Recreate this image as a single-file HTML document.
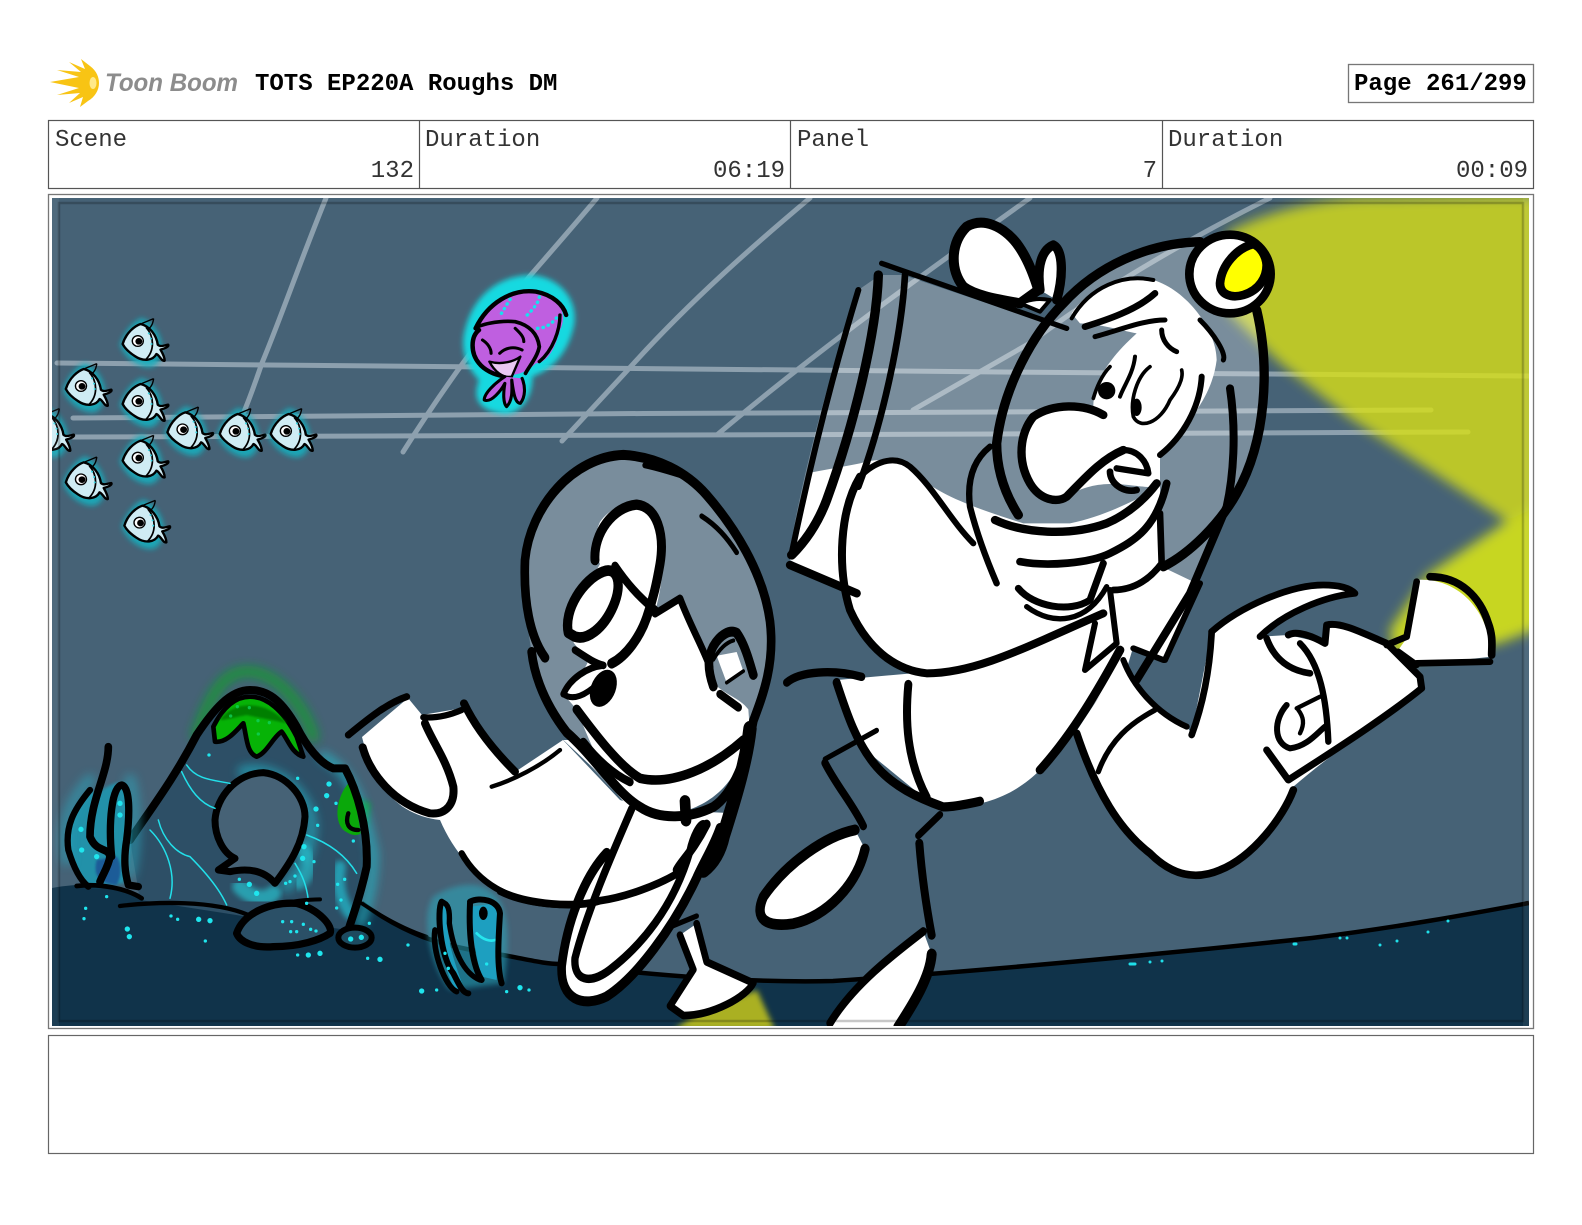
<!DOCTYPE html>
<html lang="en">
<head>
<meta charset="utf-8">
<title>TOTS EP220A Roughs DM</title>
<style>
html,body{margin:0;padding:0;background:#fff}
svg{display:block}
.m{font-family:"Liberation Mono",monospace;font-size:24px;fill:#333}
.b{font-family:"Liberation Mono",monospace;font-size:24px;font-weight:bold;fill:#000}
</style>
</head>
<body>
<svg xmlns="http://www.w3.org/2000/svg" width="1582" height="1225" viewBox="0 0 1582 1225">
<defs>
<clipPath id="img"><rect x="52" y="198" width="1477" height="828"/></clipPath>
<filter id="b3" x="-30%" y="-30%" width="160%" height="160%"><feGaussianBlur stdDeviation="3"/></filter>
<filter id="b5" x="-30%" y="-30%" width="160%" height="160%"><feGaussianBlur stdDeviation="5"/></filter>
<filter id="b6" x="-30%" y="-30%" width="160%" height="160%"><feGaussianBlur stdDeviation="6"/></filter>
<filter id="b8" x="-30%" y="-30%" width="160%" height="160%"><feGaussianBlur stdDeviation="8"/></filter>
<filter id="b14" x="-40%" y="-40%" width="180%" height="180%"><feGaussianBlur stdDeviation="14"/></filter>
<g id="f">
  <path d="M-68,4C-50,-45-25,-66-5,-76C32,-62 52,-20 54,10C52,42 46,66 20,72C-10,74-52,48-68,4Z" fill="#12aebd" opacity=".9" filter="url(#b8)"/>
  <path d="M-60,2C-50,-32-25,-52-8,-58C18,-52 38,-25 42,4C50,12 60,6 72,4C76,10 62,16 50,19C55,28 62,40 62,52C54,56 46,34 38,32C28,52 0,56-25,38C-40,28-54,14-60,2Z" fill="#cfecf4" stroke="#000" stroke-width="7" stroke-linejoin="round"/>
  <path d="M-8,-58L30,-74M14,-42C26,-52 28,-62 30,-74" fill="none" stroke="#000" stroke-width="4"/>
  <path d="M8,-48C32,-20 34,22 6,50" fill="none" stroke="#000" stroke-width="5"/>
  <path d="M16,-30h0M22,-14h0M24,2h0" stroke="#37d7e6" stroke-width="6" stroke-linecap="round"/>
  <circle cx="-16" cy="-7" r="16" fill="#fff" stroke="#000" stroke-width="4"/>
  <circle cx="-13" cy="-6" r="10" fill="#000"/>
</g>
</defs>

<rect width="1582" height="1225" fill="#fff"/>

<!-- Logo -->
<g>
<path d="M50,82L79,77L57,70L81,72L69,62L85,69L81,59L90,66C97,71 99,78 99,83C99,90 95,97 88,101L80,107L83,97L69,103L80,93L57,95L79,88Z" fill="#f8c414"/>
<ellipse cx="93" cy="83" rx="3.5" ry="6" fill="#ffe98a"/>
<text x="105" y="91" font-family="'Liberation Sans',sans-serif" font-style="italic" font-weight="bold" font-size="25" fill="#8c8c8c" textLength="133" lengthAdjust="spacingAndGlyphs">Toon Boom</text>
</g>
<text class="b" x="255" y="90">TOTS EP220A Roughs DM</text>
<rect x="1348.5" y="64.5" width="185" height="38" fill="#fff" stroke="#777" stroke-width="1.3"/>
<text class="b" x="1354" y="90">Page 261/299</text>

<!-- Table -->
<rect x="48.5" y="120.5" width="1485" height="68" fill="#fff" stroke="#555" stroke-width="1.2"/>
<path d="M419.5,120.5V188.5M790.5,120.5V188.5M1162.5,120.5V188.5" stroke="#555" stroke-width="1.2"/>
<text class="m" x="55" y="146">Scene</text>
<text class="m" x="414" y="177" text-anchor="end">132</text>
<text class="m" x="425" y="146">Duration</text>
<text class="m" x="785" y="177" text-anchor="end">06:19</text>
<text class="m" x="797" y="146">Panel</text>
<text class="m" x="1157" y="177" text-anchor="end">7</text>
<text class="m" x="1168" y="146">Duration</text>
<text class="m" x="1528" y="177" text-anchor="end">00:09</text>

<!-- Frames -->
<rect x="48.5" y="194.5" width="1485" height="834" fill="#fff" stroke="#777" stroke-width="1.3"/>
<rect x="48.5" y="1035.5" width="1485" height="118" fill="#fff" stroke="#666" stroke-width="1.2"/>

<g clip-path="url(#img)">
<rect x="52" y="198" width="1477" height="828" fill="#466276"/>

<!-- Grid -->
<g fill="none" stroke="#8da0ae" stroke-width="5" stroke-linecap="round">
<path d="M326,198C300,262 280,320 262,363C255,383 250,398 243,414"/>
<path d="M597,198C570,230 548,255 529,277C500,315 480,340 463,363C440,395 420,425 403,452"/>
<path d="M810,198C760,240 690,300 625,373L562,441"/>
<path d="M1030,198C950,255 830,340 718,434"/>
<path d="M1270,198C1190,238 1100,290 1030,343L913,410"/>
<path d="M57,363C350,366 750,369 1000,372C1200,372 1400,374 1529,376"/>
<path d="M73,418C300,415 700,413 1000,412C1200,411 1330,411 1431,410"/>
<path d="M73,437C300,436 700,435 1000,434C1200,433 1350,433 1468,432"/>
</g>

<!-- Beams -->
<g filter="url(#b6)" opacity=".8">
<path d="M1228,232C1270,210 1320,200 1360,198L1540,195V530L1507,521L1350,418L1280,363L1228,312Z" fill="#d9e017"/>
<path d="M1540,505L1507,521L1427,575L1390,630L1395,662L1500,643L1540,628Z" fill="#e8f309"/>
</g>

<!-- Ground -->
<path d="M52,888C75,884 95,884 110,886C135,892 160,900 180,905C200,905 300,905 362,903C385,920 405,930 423,937C450,947 480,952 503,955C530,960 545,964 560,964C650,975 750,983 833,981C1000,970 1200,950 1312,938C1400,927 1470,914 1529,903V1030H52Z" fill="#10334a"/>
<path d="M362,903C385,920 405,930 423,937C450,947 480,952 503,955C530,960 545,964 560,964C650,975 750,983 833,981C1000,970 1200,950 1312,938C1400,927 1470,914 1529,903" fill="none" stroke="#000" stroke-width="4.5"/>
<path d="M673,1030L700,1012L757,990L775,1030Z" fill="#aab023" filter="url(#b3)"/>

<!-- Rock (zoom 3 coords) -->
<g transform="translate(40,640) scale(.33333)" fill="none" stroke-linecap="round" stroke-linejoin="round">
<path d="M470,285C520,130 570,90 630,95C710,100 790,190 820,290" stroke="#0ca02a" stroke-width="34" filter="url(#b14)" opacity=".7"/>
<path d="M885,450C880,520 920,570 980,570L990,490Z" fill="#0ca02a" filter="url(#b8)" stroke="none"/>
<path d="M270,600C330,510 400,420 470,285C520,210 570,150 630,150C690,150 730,190 770,260C800,320 840,370 880,385L915,385C950,450 985,560 980,680C965,750 945,810 925,870L620,830L300,780Z" fill="#2d4f66"/>
<path d="M850,350C920,390 960,450 1000,640C1000,720 985,790 960,850" stroke="#27aebf" stroke-width="30" filter="url(#b14)" opacity=".75"/>
<path d="M610,395C700,375 800,450 815,550C815,620 790,690 740,740" stroke="#23a8bc" stroke-width="34" filter="url(#b14)" opacity=".7"/>
<path d="M780,620C820,660 820,690 780,730" stroke="#27d4e0" stroke-width="40" filter="url(#b8)" opacity=".5"/>
<path d="M600,740C640,780 680,780 700,760" stroke="#27d4e0" stroke-width="46" filter="url(#b8)" opacity=".6"/>
<path d="M900,680C890,730 900,780 930,820" stroke="#23bed0" stroke-width="36" filter="url(#b8)" opacity=".7"/>
<path d="M705,730C680,700 640,680 570,695L535,690L585,655C550,640 525,590 525,540C530,470 590,400 670,398C740,405 795,470 795,530C790,610 750,670 705,730Z" fill="#466276" stroke="#000" stroke-width="21"/>
<path d="M520,260L525,305C560,310 590,270 610,250C620,290 620,340 650,350C680,340 700,290 725,275C745,300 755,340 790,350L770,290C730,210 680,170 630,170C580,170 545,210 520,260Z" fill="#06b306" stroke="#000" stroke-width="14"/>
<path d="M540,240C580,180 680,180 740,250C700,240 640,230 620,225C590,230 560,240 540,240Z" fill="#007f00" filter="url(#b3)" stroke="none"/>
<path d="M925,430C890,470 880,540 910,570C930,585 950,590 962,580C955,530 945,470 925,430Z" fill="#0aa80a"/>
<path d="M925,520C915,550 925,570 955,570" stroke="#000" stroke-width="13"/>
<path d="M270,600C330,510 400,420 470,285C520,210 570,150 630,150C690,150 730,190 770,260C800,320 840,370 880,385L915,385C950,450 985,560 980,680C965,750 945,810 925,870" stroke="#000" stroke-width="24"/>
<g stroke="#22e0ea" stroke-width="4.5">
<path d="M440,375C470,420 520,420 570,430M425,395C450,450 480,490 525,505M355,540C370,600 410,640 450,650C500,700 540,750 560,795M330,570C380,620 410,700 390,775M800,585C870,610 920,650 950,700M765,670C790,710 800,740 805,780"/>
</g>
<!-- left plants -->
<path d="M150,450C90,510 70,570 90,650C110,710 140,740 170,740L250,730C280,650 280,500 260,430C230,420 200,440 170,460Z" fill="#1d9ab3" filter="url(#b5)" stroke="none" opacity=".85"/>
<path d="M150,420C90,480 60,560 80,660M270,420C290,500 290,620 270,700" stroke="#2aa7bd" stroke-width="34" filter="url(#b14)" opacity=".55"/>
<path d="M170,660C160,700 170,730 230,735C250,700 240,660 230,650Z" fill="#1d5b98" filter="url(#b3)" stroke="none"/>
<path d="M205,320C205,400 150,480 150,590C170,640 205,620 210,650C205,680 190,700 180,725" stroke="#000" stroke-width="23"/>
<path d="M150,450C100,510 75,560 85,630C100,680 120,720 145,740" stroke="#000" stroke-width="19"/>
<path d="M215,650C205,550 215,440 245,435C270,440 270,520 260,600C250,660 255,700 265,735L295,740" stroke="#000" stroke-width="22"/>
<path d="M110,738C180,730 260,745 305,775" stroke="#000" stroke-width="14"/>
<path d="M240,798C350,785 520,780 625,825" stroke="#000" stroke-width="13"/>
<!-- stones -->
<path d="M590,880C610,820 690,785 770,790C840,810 880,860 870,880C840,900 780,920 700,920C640,925 600,905 590,880Z" fill="#2b5067" stroke="#000" stroke-width="22"/>
<path d="M700,795C750,785 800,778 840,778" stroke="#000" stroke-width="12"/>
<path d="M965,790C1040,840 1100,870 1160,890" stroke="#000" stroke-width="11"/>
<ellipse cx="945" cy="893" rx="50" ry="30" fill="#1d4a5f" stroke="#000" stroke-width="18"/>
<!-- coral right -->
<path d="M1180,770C1140,830 1170,980 1230,1050L1390,1030C1410,920 1410,800 1360,760C1320,720 1240,730 1180,770Z" fill="#2ba7bb" filter="url(#b8)" stroke="none" opacity=".55"/>
<path d="M1195,800C1190,880 1210,980 1245,1050L1270,1040C1240,960 1215,880 1220,800Z" fill="#1d9fc0" stroke="none"/>
<path d="M1295,800C1295,880 1310,960 1325,1010L1370,1020C1370,930 1380,850 1365,790Z" fill="#1d9fc0" stroke="none"/>
<path d="M1310,880C1330,900 1350,905 1365,900" stroke="#26e6ee" stroke-width="8"/>
<path d="M1185,870C1175,930 1215,1040 1250,1055" stroke="#000" stroke-width="17"/>
<path d="M1205,785C1190,810 1200,950 1240,1000C1260,1040 1270,1060 1285,1060" stroke="#000" stroke-width="18"/>
<path d="M1205,785C1225,790 1230,810 1228,850C1240,930 1270,1000 1320,1020" stroke="#000" stroke-width="16"/>
<path d="M1290,790C1285,900 1300,980 1325,1020" stroke="#000" stroke-width="18"/>
<path d="M1290,785C1320,770 1375,780 1380,820C1375,900 1370,980 1385,1030" stroke="#000" stroke-width="18"/>
<ellipse cx="1330" cy="820" rx="13" ry="20" fill="#000" stroke="none"/>
<!-- dots -->
<path stroke="#1fe6ee" stroke-width="16" d="M123,568h0M125,630h0M170,650h0M240,490h0M240,525h0M867,432h0M860,467h0M828,507h0M792,620h0M788,655h0M650,760h0M628,733h0M1020,958h0M262,867h0M268,890h0M476,838h0M510,842h0M840,940h0M805,945h0M932,897h0M964,892h0M1440,1043h0M1145,1053h0"/>
<path stroke="#1fe6ee" stroke-width="10" d="M507,345h0M200,770h0M137,805h0M132,836h0M393,828h0M413,838h0M496,903h0M773,945h0M983,955h0M1104,915h0M1190,1050h0M1467,1050h0M1400,1055h0M773,415h0M888,490h0M833,556h0M822,665h0M914,718h0M893,733h0M903,780h0M890,804h0M940,603h0M728,845h0M755,845h0M790,853h0M812,868h0M828,873h0M752,875h0M770,875h0M737,730h0M750,725h0M765,708h0M598,718h0M800,790h0M988,850h0M1225,985h0M1215,940h0M1340,972h0"/>
<path stroke="#0fd25a" stroke-width="10" opacity=".8" d="M592,200h0M628,203h0M572,228h0M654,242h0M688,248h0M655,282h0"/>
</g>

<!-- Fish (zoom 2 coords) -->
<g transform="translate(40,190) scale(.34435,.33333)">
<use href="#f" x="300" y="460"/>
<use href="#f" x="135" y="595"/>
<use href="#f" x="300" y="640"/>
<use href="#f" x="430" y="725"/>
<use href="#f" x="582" y="730"/>
<use href="#f" x="730" y="730"/>
<use href="#f" x="300" y="810"/>
<use href="#f" x="135" y="875"/>
<use href="#f" x="305" y="1005"/>
<use href="#f" x="26" y="730"/>

<!-- Jelly -->
<g fill="none" stroke-linecap="round" stroke-linejoin="round">
<path d="M1230,440C1250,320 1330,255 1430,255C1520,265 1565,340 1550,410C1530,500 1480,540 1430,560C1430,620 1400,670 1350,672C1290,665 1250,640 1275,570C1240,530 1225,490 1230,440Z" fill="#13d9e0" filter="url(#b8)"/>
<path d="M1265,415C1300,340 1370,295 1440,305C1505,315 1535,370 1510,420C1495,480 1470,520 1440,520C1400,560 1350,565 1310,540C1270,520 1250,480 1255,445C1258,430 1262,420 1265,415Z" fill="#bf5fe0"/>
<path d="M1340,370L1370,320M1415,375C1440,350 1450,330 1450,320M1445,415C1470,415 1495,395 1505,375" stroke="#18e0ee" stroke-width="10" stroke-dasharray="1 15"/>
<path d="M1265,415C1300,340 1370,295 1440,305C1490,315 1520,345 1528,375" stroke="#000" stroke-width="13"/>
<path d="M1265,415C1275,405 1330,390 1380,395C1420,405 1445,430 1450,470C1445,500 1420,530 1410,550" stroke="#000" stroke-width="11"/>
<path d="M1275,420C1250,440 1250,490 1275,520C1290,540 1320,555 1345,558" stroke="#000" stroke-width="13"/>
<path d="M1510,375C1510,420 1490,480 1450,515" stroke="#000" stroke-width="10"/>
<path d="M1285,450C1300,460 1310,475 1310,490M1335,490C1355,470 1380,470 1400,480M1380,415C1395,430 1405,440 1405,455" stroke="#000" stroke-width="9"/>
<path d="M1305,515C1340,525 1375,515 1395,500L1370,560C1345,565 1320,545 1305,515Z" fill="#e9c8f2" stroke="#000" stroke-width="7"/>
<path d="M1350,560C1320,580 1290,610 1290,630C1310,640 1340,600 1350,580C1345,610 1345,640 1355,650C1375,630 1370,590 1370,570C1375,610 1380,640 1395,640C1410,620 1410,590 1400,565" fill="#bf5fe0" stroke="#000" stroke-width="9"/>
</g>
</g>

<!-- Left character body, original coords -->
<path d="M362,737L408,698L422,715L463,708L515,772L563,740L620,800L680,820L705,860L660,885C600,905 540,905 505,893C480,880 455,855 440,820C400,815 375,790 362,737Z" fill="#fff"/>
<g transform="translate(40,640) scale(.33333)" fill="none" stroke="#000" stroke-linecap="round" stroke-linejoin="round">
<path d="M925,285C980,240 1040,190 1100,170" stroke-width="21"/>
<path d="M968,322C990,400 1060,490 1170,520C1220,525 1245,490 1240,440C1220,360 1180,310 1155,250" stroke-width="24"/>
<path d="M1150,232C1190,235 1230,225 1265,210" stroke-width="19"/>
<path d="M1272,190C1310,270 1370,340 1425,395" stroke-width="24"/>
<path d="M1355,440C1420,420 1500,380 1560,330" stroke-width="13"/>
<path d="M1265,640C1310,720 1400,790 1560,795" stroke-width="19"/>
</g>

<!-- Left character head (zoom 4 coords) -->
<g transform="translate(500,430) scale(.33333,.38270)" fill="none" stroke="#000" stroke-linecap="round" stroke-linejoin="round">
<path d="M370,62C520,70 700,220 790,420C830,540 810,660 760,760C700,900 660,990 480,1010C380,1000 290,900 200,800C130,720 80,600 75,400C80,220 220,62 370,62Z" fill="#fff" fill-opacity=".28" stroke="none"/>
<path d="M535,445C570,520 610,580 640,660C670,690 720,700 745,730L750,790C720,900 660,990 480,1010C380,1000 330,950 230,730L190,690C210,650 280,620 260,590C210,560 190,510 210,470C240,410 290,370 300,350C285,320 275,290 300,240C340,190 430,170 470,230C500,300 490,400 465,475Z" fill="#fff" stroke="none"/>
<path d="M190,810L250,810L400,930L480,1010L400,1000L300,900Z" fill="#fff" stroke="none"/>
<path d="M320,1105C250,1170 200,1290 185,1400C180,1490 250,1510 320,1480C410,1430 520,1300 590,1170C620,1120 650,1080 670,1000L400,990Z" fill="#fff" stroke="none"/>
<path d="M590,1290L620,1390L760,1445C740,1480 640,1530 550,1530L510,1505L580,1410L540,1320Z" fill="#fff" stroke-width="0"/>
<path d="M135,595C90,540 70,450 75,340C90,200 220,70 370,65C470,70 560,110 620,170C700,250 790,370 810,500C825,610 790,690 760,760C740,860 700,950 640,985C570,1015 480,1020 420,985C350,950 280,850 200,790C120,700 100,620 95,580" stroke-width="26"/>
<path d="M435,92C480,100 530,115 570,125" stroke-width="16"/>
<path d="M605,225C650,250 680,280 710,320" stroke-width="14"/>
<path d="M285,340C280,270 340,200 410,195C470,200 495,270 480,350C470,400 460,440 440,490C420,540 380,590 335,610" stroke-width="27"/>
<path d="M205,530C190,470 250,390 310,370C350,355 370,400 340,460C310,520 260,550 225,540Z" stroke-width="28"/>
<path d="M345,355C380,400 420,440 465,470" stroke-width="22"/>
<path d="M465,480L540,440C570,510 610,570 630,620" stroke-width="20"/>
<path d="M225,575C260,595 285,610 310,615" stroke-width="20"/>
<path d="M190,690C210,650 260,620 310,615" stroke-width="18"/>
<path d="M190,690C220,710 260,690 290,665" stroke-width="16"/>
<ellipse cx="310" cy="675" rx="36" ry="52" transform="rotate(30 310 675)" fill="#000" stroke="none"/>
<path d="M640,670C620,620 625,590 640,565C660,535 690,520 710,530C735,560 750,610 760,640" stroke-width="26"/>
<path d="M650,590L710,580L730,630L680,660Z" fill="#fff" stroke="none"/>
<path d="M640,600C660,570 680,555 700,550" stroke-width="11"/>
<path d="M680,660L730,630" stroke-width="10"/>
<path d="M660,690L715,725" stroke-width="22"/>
<path d="M230,730C290,800 360,880 420,910C520,930 640,880 730,810" stroke-width="25"/>
<path d="M250,815C290,860 340,900 390,920" stroke-width="22"/>
<path d="M750,780C740,860 710,950 670,1060C660,1100 640,1130 610,1150" stroke-width="40"/>
<path d="M620,1030C580,1100 540,1130 530,1150" stroke-width="24"/>
<path d="M555,970L558,1020" stroke-width="32"/>
<path d="M0,1205C80,1240 230,1250 300,1230C380,1220 470,1190 530,1160" stroke-width="20"/>
<path d="M320,1105C250,1170 200,1290 185,1400C180,1490 250,1510 320,1480C410,1430 520,1300 590,1170C610,1130 640,1090 660,1040" stroke-width="26"/>
<path d="M395,990C340,1100 260,1260 225,1380C220,1440 270,1450 330,1410C420,1350 520,1250 570,1100C580,1060 600,1030 610,1030" stroke-width="22"/>
<path d="M590,1290L620,1390L760,1445C740,1480 640,1530 550,1530L510,1505L580,1410L540,1320" stroke-width="20"/>
<path d="M520,1295L590,1270" stroke-width="14"/>
</g>

<!-- Right character fills & glass (zoom 5 coords) -->
<g transform="translate(770,200) scale(.33333)" fill="none" stroke="#000" stroke-linecap="round" stroke-linejoin="round">
<path d="M265,270L330,225L400,225L830,370L900,300C1000,190 1150,130 1290,125L1470,330C1500,500 1480,750 1370,950L1280,1150L1200,1120L600,1000L200,1080L60,1050C100,800 200,450 265,270Z" fill="#fff" fill-opacity=".28" stroke="none"/>
<path d="M60,1080L110,820C160,810 220,800 270,790C330,770 400,780 450,830C500,880 600,920 760,970L900,970C1000,950 1100,900 1170,860L1175,1100L1280,1150L1180,1380L1090,1340L1060,1440L480,1425C370,1410 290,1340 240,1230L240,1180Z" fill="#fff" stroke="none"/>
<path d="M905,340C960,260 1060,220 1150,240C1250,270 1340,390 1340,480C1330,560 1290,640 1170,760L1170,860C1100,870 1000,820 890,890C860,910 800,890 770,830C740,770 750,690 790,640C850,610 920,610 970,620C970,560 1000,490 1100,400C1050,390 980,370 930,370Z" fill="#fff" stroke="none"/>
</g>

<!-- Right character torso -->
<path d="M837,680L863,748L923,797L943,807C990,808 1020,790 1040,770L1073,733L1140,640L1060,640L950,670Z" fill="#fff"/>

<!-- Right arm & lamp (zoom 6 coords) -->
<g transform="translate(1040,500) scale(.33333)" fill="none" stroke="#000" stroke-linecap="round" stroke-linejoin="round">
<path d="M105,700L250,480L345,630L440,680L455,700L515,395C600,320 750,255 850,255C900,255 930,265 945,280C850,290 730,340 660,410L745,405L855,430L860,375C900,365 960,395 1040,430L1140,530L1145,565C1040,650 900,740 760,860C730,950 640,1070 540,1110C470,1140 400,1130 330,1060C240,990 170,880 105,700Z" fill="#fff" stroke="none"/>
<path d="M1075,450L1110,400L1130,240C1250,230 1350,330 1355,470L1130,495Z" fill="#fff" stroke="none"/>
<path d="M240,450C180,560 100,700 0,810" stroke-width="26"/>
<path d="M515,395C600,320 750,255 850,255C900,255 930,265 945,280C850,290 730,340 660,410" stroke-width="20"/>
<path d="M515,395C510,500 490,610 455,705" stroke-width="20"/>
<path d="M250,480C280,560 350,640 440,680" stroke-width="18"/>
<path d="M680,415C700,470 740,510 810,520" stroke-width="20"/>
<path d="M745,405C770,390 820,410 855,430L860,375C900,365 960,395 1040,430L1140,530L1145,565C1040,650 900,740 745,840L680,750" stroke-width="21"/>
<path d="M780,430C840,490 860,600 865,725" stroke-width="19"/>
<path d="M740,615C700,660 700,730 750,745C800,740 830,700 855,680" stroke-width="18"/>
<path d="M770,625L840,590" stroke-width="13"/>
<path d="M775,630C790,650 795,670 780,700" stroke-width="13"/>
<path d="M760,870C730,950 640,1070 540,1110C470,1140 400,1130 330,1060C240,990 170,880 110,700" stroke-width="23"/>
<path d="M345,630C270,670 210,720 175,815" stroke-width="16"/>
<path d="M1130,245L1100,410L1040,435" stroke-width="20"/>
<path d="M1170,230C1260,230 1320,290 1345,370C1360,410 1355,440 1355,465" stroke-width="23"/>
<path d="M1130,490L1350,485" stroke-width="20"/>
<path d="M1075,455L1130,495" stroke-width="19"/>
</g>

<!-- Right character lines (zoom 5 coords) -->
<g transform="translate(770,200) scale(.33333)" fill="none" stroke="#000" stroke-linecap="round" stroke-linejoin="round">
<path d="M335,190L890,385" stroke-width="16"/>
<path d="M750,310C700,300 620,290 580,260C540,210 540,130 590,80C640,50 700,80 740,130C770,170 790,220 805,270Z" fill="#fff" stroke-width="30"/>
<path d="M810,270C800,200 815,150 850,135C880,150 880,230 860,300" fill="#fff" stroke-width="28"/>
<path d="M750,310C790,295 810,295 840,300L810,335Z" fill="#fff" stroke-width="12"/>
<path d="M265,270C210,450 140,700 65,1060" stroke-width="18"/>
<path d="M325,225C320,400 250,680 170,900C140,980 100,1030 65,1065" stroke-width="28"/>
<path d="M405,225C395,400 340,660 265,860" stroke-width="20"/>
<path d="M60,1095C120,1120 190,1150 260,1180" stroke-width="25"/>
<path d="M270,830C210,930 200,1100 240,1230C290,1340 370,1410 470,1420C620,1420 770,1340 1000,1240" stroke-width="24"/>
<path d="M270,830C310,790 370,760 420,800C490,860 540,960 610,1030" stroke-width="18"/>
<path d="M1290,125C1130,130 980,200 880,310C790,400 700,560 680,730C680,820 710,890 745,945" stroke-width="28"/>
<path d="M1460,330C1500,500 1490,720 1400,880C1350,970 1260,1060 1180,1100" stroke-width="28"/>
<path d="M1380,565C1400,700 1390,830 1370,920L1260,1180L1100,1440" stroke-width="24"/>
<path d="M660,740C610,780 590,840 600,920C620,1000 650,1080 680,1150" stroke-width="19"/>
<path d="M675,960C760,1000 900,1010 1010,970C1080,940 1130,890 1160,850" stroke-width="25"/>
<path d="M750,1085C830,1100 960,1090 1020,1060C1100,1020 1160,980 1190,850" stroke-width="23"/>
<path d="M1170,940L1175,1090C1130,1150 1080,1170 1030,1170" stroke-width="20"/>
<path d="M745,1165C790,1220 900,1240 960,1200L1000,1090" stroke-width="21"/>
<path d="M770,1220C850,1280 950,1270 1010,1160" stroke-width="16"/>
<path d="M975,1270L945,1410L1040,1330L1020,1170" stroke-width="18"/>
<path d="M760,1345C830,1310 900,1280 970,1250" stroke-width="11"/>
<path d="M1180,1380L1090,1345M1185,1380L1290,1150" stroke-width="18"/>
<path d="M905,355C960,260 1060,220 1150,240" stroke-width="12"/>
<path d="M945,380C1010,360 1100,330 1155,280" stroke-width="20"/>
<path d="M975,410C1050,390 1120,360 1185,360" stroke-width="15"/>
<path d="M1175,390C1175,420 1195,445 1220,455" stroke-width="15"/>
<path d="M1290,360C1330,400 1370,460 1360,480" stroke-width="15"/>
<path d="M1095,470C1090,520 1060,560 1050,590" stroke-width="12"/>
<path d="M970,595C985,545 1005,515 1020,500" stroke-width="11"/>
<circle cx="1010" cy="572" r="26" fill="#000" stroke="none"/>
<path d="M1140,500C1100,530 1080,600 1090,650C1110,690 1170,670 1200,600C1230,560 1240,530 1235,510" stroke-width="11"/>
<ellipse cx="1100" cy="622" rx="15" ry="26" fill="#000" stroke="none"/>
<path d="M1295,530C1290,620 1240,710 1170,765" stroke-width="18"/>
<path d="M1000,645C940,610 850,610 790,650C750,700 740,780 780,850C810,900 860,910 890,890C940,840 990,780 1060,750" stroke-width="25"/>
<path d="M1060,750C1100,750 1130,780 1135,820L1040,805" stroke-width="19"/>
<path d="M1020,815C1020,850 1060,880 1100,870" stroke-width="20"/>
<ellipse cx="1380" cy="222" rx="122" ry="118" fill="#fff" stroke="#000" stroke-width="26"/>
<path d="M1450,132C1400,145 1355,195 1350,250C1350,285 1385,295 1420,285C1470,270 1490,230 1490,195C1488,165 1470,140 1450,132Z" fill="#ffff00" stroke="#000" stroke-width="26"/>
</g>

<!-- Right legs (zoom 4 coords) -->
<g transform="translate(500,430) scale(.33333,.38270)" fill="none" stroke="#000" stroke-linecap="round" stroke-linejoin="round">
<path d="M1065,1045C980,1060 860,1130 790,1220C760,1280 800,1300 880,1290C980,1270 1070,1190 1095,1095Z" fill="#fff" stroke="none"/>
<path d="M1270,1310C1180,1370 1060,1450 990,1570L1195,1570C1240,1500 1290,1430 1295,1370Z" fill="#fff" stroke="none"/>
<path d="M860,660C900,630 1000,625 1085,645" stroke-width="22"/>
<path d="M1010,660C1040,740 1070,820 1130,880C1180,930 1250,960 1330,985C1370,985 1440,970 1440,970" stroke-width="24"/>
<path d="M1225,665C1215,760 1220,860 1280,960" stroke-width="24"/>
<path d="M975,860L1130,785" stroke-width="14"/>
<path d="M975,870C1010,930 1060,980 1090,1035" stroke-width="22"/>
<path d="M1065,1045C980,1060 860,1130 790,1220C760,1280 800,1300 880,1290C980,1270 1070,1190 1095,1095" stroke-width="28"/>
<path d="M1255,1060L1320,1005" stroke-width="19"/>
<path d="M1258,1080C1265,1160 1280,1250 1295,1320" stroke-width="24"/>
<path d="M1270,1310C1180,1370 1060,1450 990,1550" stroke-width="22"/>
<path d="M1295,1370C1290,1430 1240,1500 1195,1560" stroke-width="30"/>
</g>

<!-- Right ground dots -->
<path fill="none" stroke="#1fe0ea" stroke-linecap="round" stroke-width="3" d="M1130,964h5M1150,962h0M1162,961h0M1294,944h2M1340,938h0M1347,938h0M1380,945h0M1397,941h0M1428,932h0M1448,921h0"/>

<!-- Inner frame overlay -->
<rect x="59" y="203" width="1464" height="818" fill="none" stroke="#000" stroke-opacity=".22" stroke-width="2.5"/>
<rect x="52" y="198" width="7" height="828" fill="#fff" opacity=".05"/>
<rect x="1523" y="198" width="6" height="828" fill="#fff" opacity=".06"/>
</g>
</svg>
</body>
</html>
